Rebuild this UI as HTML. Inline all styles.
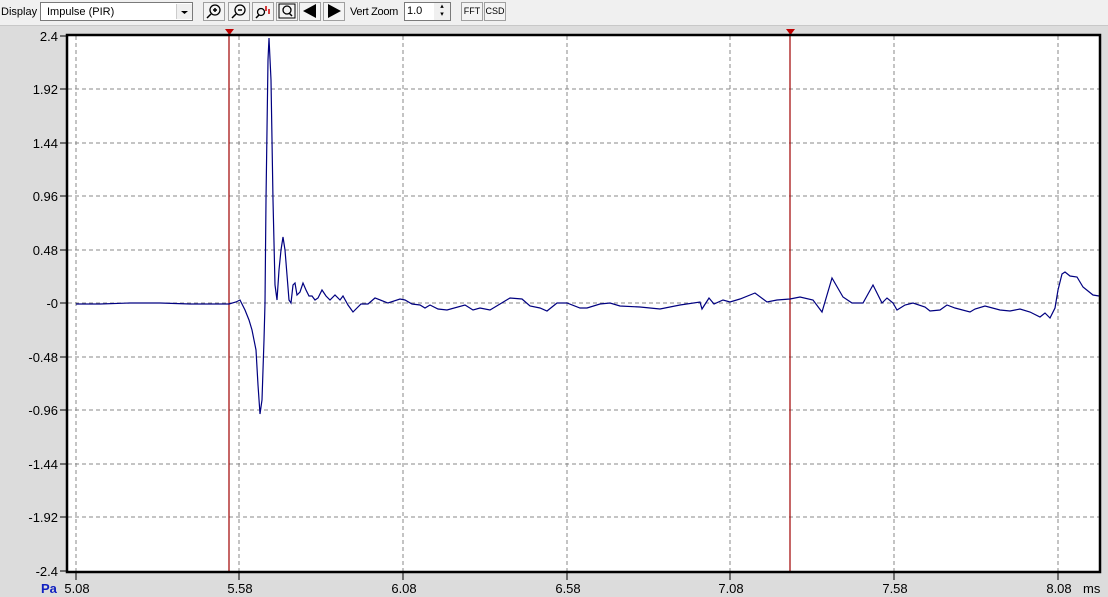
<!DOCTYPE html>
<html><head><style>
body{margin:0;width:1108px;height:597px;background:#dcdcdc;font-family:"Liberation Sans",sans-serif;overflow:hidden;position:relative}
.tb{position:absolute;left:0;top:0;width:1108px;height:25px;background:#f0f0f0;border-bottom:1px solid #c8c8c8}
.t{position:absolute;font-size:11px;color:#000}
.btn{position:absolute;top:2px;height:19px;border:1px solid #a0a0a0;background:#f4f4f4;box-sizing:border-box}
</style></head><body>
<div class="tb">
<div class="t" style="left:1px;top:6px">Display</div>
<div style="position:absolute;left:40px;top:2px;width:153px;height:19px;border:1px solid #7a7a7a;background:#fff;box-sizing:border-box;font-size:11px;padding:3px 0 0 6px">Impulse (PIR)</div>
<div style="position:absolute;left:176px;top:4px;width:15px;height:15px;background:#f0f0f0;border-left:1px solid #ccc"><svg width="15" height="15"><path d="M4 7h7l-3.5 3z" fill="#000"/></svg></div>
<div class="btn" style="left:203px;width:22px"><svg width="20" height="17"><circle cx="11" cy="7" r="5" fill="none" stroke="#000" stroke-width="1.3"/><path d="M9 7h4M11 5v4M7 11l-4 4" stroke="#000" stroke-width="1.5"/></svg></div>
<div class="btn" style="left:228px;width:22px"><svg width="20" height="17"><circle cx="11" cy="7" r="5" fill="none" stroke="#000" stroke-width="1.3"/><path d="M9 7h4M7 11l-4 4" stroke="#000" stroke-width="1.5"/></svg></div>
<div class="btn" style="left:252px;width:22px"><svg width="20" height="17"><circle cx="8" cy="9" r="3.5" fill="none" stroke="#000" stroke-width="1.3"/><path d="M6 12l-3 3" stroke="#000" stroke-width="1.5"/><path d="M13 3v5M16 6v5" stroke="#c00" stroke-width="1.5"/></svg></div>
<div class="btn" style="left:276px;width:22px"><svg width="20" height="17"><rect x="2" y="1" width="16" height="14" fill="none" stroke="#000"/><circle cx="10" cy="7" r="4" fill="none" stroke="#000" stroke-width="1.3"/><path d="M12 10l3 3" stroke="#000" stroke-width="1.5"/></svg></div>
<div class="btn" style="left:299px;width:22px"><svg width="20" height="17"><path d="M16 1v14L3 8z" fill="#000"/></svg></div>
<div class="btn" style="left:323px;width:22px"><svg width="20" height="17"><path d="M4 1v14L17 8z" fill="#000"/></svg></div>
<div class="t" style="left:350px;top:6px;letter-spacing:-0.3px">Vert Zoom</div>
<div style="position:absolute;left:404px;top:2px;width:47px;height:19px;border:1px solid #7a7a7a;background:#fff;box-sizing:border-box;font-size:11px;padding:2px 0 0 2px">1.0</div>
<div style="position:absolute;left:434px;top:3px;width:16px;height:17px;background:#f0f0f0;font-size:7px;line-height:8px;text-align:center">▴<br>▾</div>
<div class="btn" style="left:461px;width:22px;font-size:9px;text-align:center;padding-top:3px">FFT</div>
<div class="btn" style="left:484px;width:22px;font-size:9px;text-align:center;padding-top:3px">CSD</div>
</div>
<svg width="1108" height="597" style="position:absolute;left:0;top:0">
<rect x="67" y="35" width="1033" height="537" fill="#fff"/>
<g stroke="#888" stroke-dasharray="4,3" stroke-width="1">
<path d="M76 36V571M239 36V571M403 36V571M567 36V571M730 36V571M894 36V571M1058 36V571"/>
<path d="M68 89H1099M68 143H1099M68 196H1099M68 250H1099M68 303H1099M68 357H1099M68 410H1099M68 464H1099M68 517H1099"/>
</g>
<g stroke="#000"><path d="M60 36H67M60 89H67M60 143H67M60 196H67M60 250H67M60 303H67M60 357H67M60 410H67M60 464H67M60 517H67M60 571H67"/>
<path d="M76 572V580M239 572V580M403 572V580M567 572V580M730 572V580M894 572V580M1058 572V580"/></g>
<path d="M229 30V572M790 30V572" stroke="#a00000" stroke-width="1.2"/>
<path d="M225 29h9l-4.5 6z M786 29h9l-4.5 6z" fill="#c00000"/>
<polyline fill="none" stroke="#000080" stroke-width="1.2" points="76,304 100,304 130,303 160,303 190,304 229,304 236,302 240,300 245,310 249,320 252,330 256,350 258,385 260,414 262,400 264,340 265,303 266,200 268,60 269,38 271,80 273,200 275,285 277,300 279,270 281,250 283,237 285,250 287,275 289,300 291,303 293,285 295,283 297,295 300,292 303,283 306,290 309,296 312,296 315,300 318,298 322,290 326,296 330,300 335,295 340,300 343,296 348,305 353,312 361,304 368,304 375,298 388,303 400,299 405,300 412,304 420,305 425,308 430,305 438,309 447,310 465,305 473,310 480,308 490,310 500,304 510,298 522,299 530,306 540,308 547,311 557,303 567,303 580,308 587,308 600,304 610,303 620,306 640,307 660,309 680,305 700,302 702,309 709,298 714,304 723,300 730,302 740,299 755,293 767,302 777,300 790,299 800,297 813,300 822,312 832,278 843,297 852,303 863,303 873,285 882,303 887,298 893,303 897,310 905,305 913,303 925,307 930,311 940,310 947,305 955,308 970,312 975,309 985,306 1000,310 1010,311 1020,309 1030,312 1040,317 1045,313 1050,318 1055,308 1058,290 1062,274 1065,272 1070,276 1077,277 1083,287 1088,291 1093,295 1099,296"/>
<rect x="67" y="35" width="1033" height="537" fill="none" stroke="#000" stroke-width="2.5"/>
<g font-family="Liberation Sans" font-size="13" fill="#000" text-anchor="end">
<text x="58" y="41">2.4</text><text x="58" y="94">1.92</text><text x="58" y="148">1.44</text><text x="58" y="201">0.96</text><text x="58" y="255">0.48</text><text x="58" y="308">-0</text><text x="58" y="362">-0.48</text><text x="58" y="415">-0.96</text><text x="58" y="469">-1.44</text><text x="58" y="522">-1.92</text><text x="58" y="576">-2.4</text>
</g>
<g font-family="Liberation Sans" font-size="13" fill="#000" text-anchor="middle">
<text x="77" y="593">5.08</text><text x="240" y="593">5.58</text><text x="404" y="593">6.08</text><text x="568" y="593">6.58</text><text x="731" y="593">7.08</text><text x="895" y="593">7.58</text><text x="1059" y="593">8.08</text>
</g>
<text x="1083" y="593" font-family="Liberation Sans" font-size="13">ms</text>
<text x="41" y="593" font-family="Liberation Sans" font-size="13" font-weight="bold" fill="#1020c0">Pa</text>
</svg>
</body></html>
